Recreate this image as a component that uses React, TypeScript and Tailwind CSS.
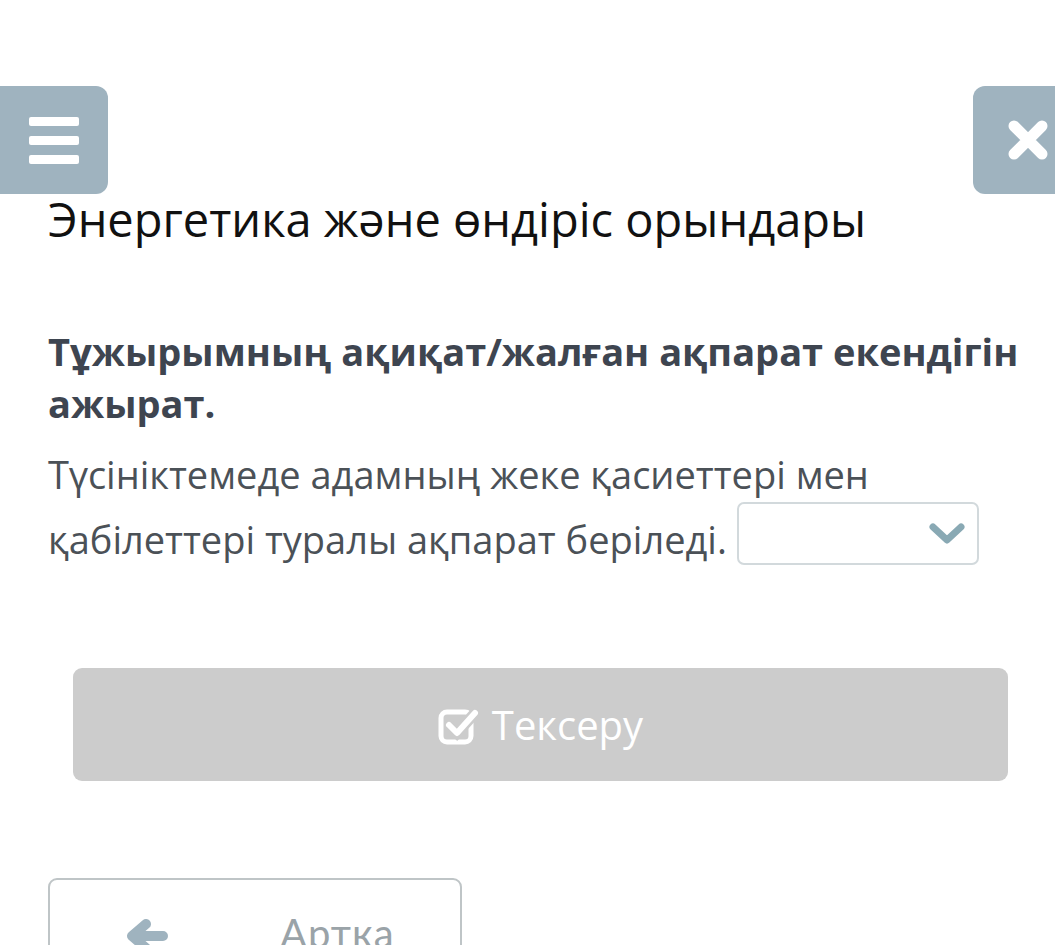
import React from "react";

export default function App() {
  return (
    <div className="w-[1055px] h-[945px] overflow-hidden bg-white relative" style={{ fontFamily: '"Open Sans", "Noto Sans", sans-serif' }}>
      <div className="h-[86px]" />
      <div className="flex justify-between h-[108px]">
        <div className="w-[108px] h-[108px] bg-[#9fb3bf] rounded-r-[12px] flex flex-col items-center justify-center gap-[10px]">
          <div className="w-[50px] h-[9px] bg-white rounded-[2px]" />
          <div className="w-[50px] h-[9px] bg-white rounded-[2px]" />
          <div className="w-[50px] h-[9px] bg-white rounded-[2px]" />
        </div>
        <div className="w-[82px] h-[108px] bg-[#9fb3bf] rounded-l-[12px] flex items-center pl-[34px]">
          <svg width="42" height="42" viewBox="0 0 42 42">
            <path d="M7 7 L35 35 M35 7 L7 35" stroke="white" strokeWidth="11" strokeLinecap="round" />
          </svg>
        </div>
      </div>
      <div className="pl-[48px] pr-[30px]">
        <h1 className="text-[47px] leading-[58px] text-[#111] mt-[-4px]">Энергетика және өндіріс орындары</h1>
        <p className="mt-[77px] text-[38px] leading-[52px] font-bold text-[#3e4550]">
          Тұжырымның ақиқат/жалған ақпарат екендігін ажырат.
        </p>
        <p className="mt-[13px] text-[38px] leading-[65px] text-[#4b5157]">
          Түсініктемеде адамның жеке қасиеттері мен қабілеттері туралы ақпарат беріледі.{" "}
          <span className="inline-flex align-middle w-[242px] h-[63px] border-2 border-[#d2d9dc] rounded-[7px] items-center justify-end pr-[12px] relative top-[-10px]">
            <svg width="36" height="22" viewBox="0 0 36 22">
              <path d="M4 4 L18 17 L32 4" stroke="#89a9b4" strokeWidth="7" fill="none" strokeLinecap="round" strokeLinejoin="round" />
            </svg>
          </span>
        </p>
      </div>
      <div className="mt-[93px] ml-[73px] w-[935px] h-[113px] bg-[#cccccc] rounded-[9px] flex items-center justify-center gap-[12px]">
        <svg width="42" height="40" viewBox="0 0 42 40">
          <rect x="3" y="7" width="30" height="30" rx="6" stroke="white" strokeWidth="5" fill="none" />
          <path d="M11 20 L19 28 L37 8" stroke="#cccccc" strokeWidth="11" fill="none" />
          <path d="M11 20 L19 28 L37 8" stroke="white" strokeWidth="6" fill="none" strokeLinecap="round" strokeLinejoin="round" />
        </svg>
        <span className="text-[40px] text-white leading-none">Тексеру</span>
      </div>
      <div className="mt-[97px] ml-[48px] w-[414px] h-[120px] border-2 border-[#bfc5c7] rounded-[9px] flex items-start pt-[33px] pl-[76px]">
        <svg width="42" height="34" viewBox="0 0 42 34" className="mt-[6px]">
          <path d="M20 5 L6 17 L20 29 M7 17 L37 17" stroke="#9fb3bf" strokeWidth="10" fill="none" strokeLinecap="round" strokeLinejoin="round" />
        </svg>
        <span className="ml-[112px] text-[40px] leading-none text-[#9aa3a8] tracking-[1px]" style={{ fontFamily: 'Lato, "Open Sans", sans-serif' }}>Артка</span>
      </div>
    </div>
  );
}
